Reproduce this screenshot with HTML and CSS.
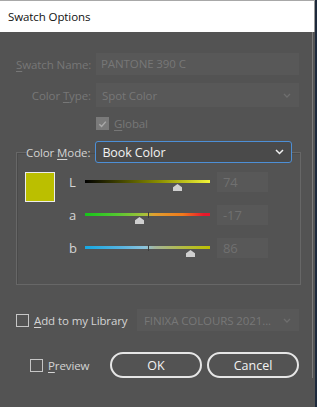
FILE: index.html
```html
<!DOCTYPE html>
<html lang="en">
<head>
    <meta charset="UTF-8">
    <title>Swatch Options</title>
    <link rel="stylesheet" href="styles.css">
</head>
<body>
    <div class="window">
        <div class="titlebar">Swatch Options</div>
        <div class="content">
            <div class="form-grid">
                <label class="field-label disabled"><u>S</u>watch Name:</label>
                <div class="text-input disabled">PANTONE 390 C</div>

                <label class="field-label disabled">Color <u>T</u>ype:</label>
                <div class="select disabled">
                    <span>Spot Color</span>
                    <svg class="chevron" width="8" height="5" viewBox="0 0 8 5"><path d="M1 1 L4 4 L7 1" fill="none" stroke="#6e6e6e" stroke-width="1.3"/></svg>
                </div>

                <span></span>
                <div class="check-row disabled">
                    <span class="checkbox checked">
                        <svg width="12" height="12" viewBox="0 0 12 12"><path d="M2.5 6.2 L5 8.6 L9.6 3.4" fill="none" stroke="#a9a9a9" stroke-width="1.6"/></svg>
                    </span>
                    <span><u>G</u>lobal</span>
                </div>
            </div>

            <fieldset class="group">
                <legend class="mode-row">
                    <label class="mode-label">Color <u>M</u>ode:</label>
                    <div class="select active">
                        <span>Book Color</span>
                        <svg class="chevron" width="9" height="6" viewBox="0 0 9 6"><path d="M1 1 L4.5 4.5 L8 1" fill="none" stroke="#f0f0f0" stroke-width="1.5"/></svg>
                    </div>
                </legend>
                <div class="color-area">
                    <div class="swatch"></div>
                    <div class="sliders">
                        <div class="slider-row">
                            <span class="channel">L</span>
                            <div class="track-wrap">
                                <div class="track track-l"></div>
                                <span class="thumb" style="left: 92px"></span>
                            </div>
                            <div class="value-box">74</div>
                        </div>
                        <div class="slider-row">
                            <span class="channel">a</span>
                            <div class="track-wrap">
                                <div class="track track-a"></div>
                                <span class="mid-mark"></span>
                                <span class="thumb" style="left: 54px"></span>
                            </div>
                            <div class="value-box">-17</div>
                        </div>
                        <div class="slider-row">
                            <span class="channel">b</span>
                            <div class="track-wrap">
                                <div class="track track-b"></div>
                                <span class="mid-mark"></span>
                                <span class="thumb" style="left: 105px"></span>
                            </div>
                            <div class="value-box">86</div>
                        </div>
                    </div>
                </div>
            </fieldset>

            <div class="library-row">
                <div class="check-row">
                    <span class="checkbox"></span>
                    <span><u>A</u>dd to my Library</span>
                </div>
                <div class="select disabled library-select">
                    <span>FINIXA COLOURS 2021...</span>
                    <svg class="chevron" width="8" height="5" viewBox="0 0 8 5"><path d="M1 1 L4 4 L7 1" fill="none" stroke="#6e6e6e" stroke-width="1.3"/></svg>
                </div>
            </div>

            <div class="footer-row">
                <div class="check-row preview">
                    <span class="checkbox"></span>
                    <span><u>P</u>review</span>
                </div>
                <div class="buttons">
                    <button class="btn">OK</button>
                    <button class="btn">Cancel</button>
                </div>
            </div>
        </div>
    </div>
</body>
</html>
```
FILE: styles.css
```css
body {
    margin: 0;
    background-color: #1d2a3c;
    font-family: "Open Sans", "Noto Sans", sans-serif;
    font-size: 11.5px;
    letter-spacing: -0.1px;
}
u {
    text-decoration-thickness: 1px;
    text-underline-offset: 2px;
}
.window {
    width: 315px;
    height: 407px;
    background-color: #535353;
    border-top: 1px solid #a8a8a8;
    box-sizing: border-box;
}
.titlebar {
    height: 31px;
    background-color: #ffffff;
    color: #111111;
    font-size: 11.5px;
    line-height: 31px;
    padding-left: 8px;
    border-right: 1px solid #9a9a9a;
}
.content {
    width: 313px;
    box-sizing: border-box;
    padding: 21px 13px 0 16px;
    border-right: 1px solid #7a7a7a;
}
.form-grid {
    display: grid;
    grid-template-columns: 75px 1fr;
    column-gap: 5px;
    row-gap: 8px;
    align-items: center;
}
.field-label {
    text-align: right;
    white-space: nowrap;
}
.disabled {
    color: #777777;
}
.text-input {
    height: 22px;
    line-height: 22px;
    background-color: #585858;
    padding-left: 5px;
}
.select {
    display: flex;
    align-items: center;
    justify-content: space-between;
    box-sizing: border-box;
}
.select.disabled {
    height: 24px;
    background-color: #585858;
    padding: 0 8px 0 6px;
}
.check-row {
    display: flex;
    align-items: center;
    gap: 5px;
    color: #d4d4d4;
    height: 16px;
}
.check-row.disabled {
    color: #777777;
}
.checkbox {
    width: 11px;
    height: 11px;
    border: 1px solid #c6c6c6;
    flex: none;
    display: flex;
}
.checkbox.checked {
    background-color: #7a7a7a;
    border-color: #7a7a7a;
}
.group {
    margin: 10px 0 0 0;
    padding: 9px 8px 26px 8px;
    border: 1px solid #676767;
    box-shadow: inset 1px 1px 0 #4a4a4a;
    width: 284px;
    box-sizing: border-box;
}
.mode-row {
    display: flex;
    align-items: center;
    gap: 5px;
    padding: 0;
    margin-left: 1px;
}
.mode-label {
    color: #d4d4d4;
    white-space: nowrap;
}
.select.active {
    width: 197px;
    height: 22px;
    border: 1px solid #4d8fd6;
    border-radius: 3px;
    background-color: #4a4a4a;
    color: #f2f2f2;
    font-size: 12.5px;
    padding: 0 7px 0 6px;
}
.color-area {
    display: flex;
    gap: 11px;
}
.swatch {
    width: 28px;
    height: 28px;
    background-color: #bbbf00;
    border: 1px solid #ececec;
    flex: none;
}
.sliders {
    display: flex;
    flex-direction: column;
    gap: 13px;
}
.slider-row {
    display: flex;
    align-items: center;
    height: 20px;
}
.channel {
    width: 19px;
    color: #d4d4d4;
    font-size: 13px;
    padding-left: 3px;
    box-sizing: border-box;
}
.track-wrap {
    position: relative;
    width: 125px;
    height: 20px;
    margin-right: 7px;
}
.track {
    position: absolute;
    left: 0;
    right: 0;
    top: 8px;
    height: 3px;
}
.track-l {
    background: linear-gradient(to right, #000000, #3a3c00 25%, #8c9000 60%, #f2f53a);
}
.track-a {
    background: linear-gradient(to right, #16c41a, #52c830 25%, #a8c03a 48%, #e0a030 55%, #f07a1c 78%, #e8182c 95%);
}
.track-b {
    background: linear-gradient(to right, #16a8e2, #5ab4e0 30%, #8cc4dc 48%, #a4b49a 56%, #b4bc3c 80%, #bcc000);
}
.mid-mark {
    position: absolute;
    left: 63px;
    top: 7px;
    width: 1px;
    height: 6px;
    background-color: #3c3c3c;
}
.thumb {
    position: absolute;
    top: 12px;
    width: 9px;
    height: 7px;
    margin-left: -4px;
    background-color: #cfcfcf;
    clip-path: polygon(50% 0, 100% 45%, 100% 100%, 0 100%, 0 45%);
}
.value-box {
    width: 51px;
    height: 20px;
    line-height: 20px;
    background-color: #585858;
    color: #707070;
    padding-left: 6px;
    box-sizing: border-box;
    font-size: 13px;
}
.library-row {
    display: flex;
    align-items: center;
    justify-content: space-between;
    margin-top: 24px;
}
.select.library-select {
    width: 162px;
    height: 22px;
    padding: 0 8px 0 7px;
}
.footer-row {
    display: flex;
    align-items: center;
    justify-content: space-between;
    margin-top: 21px;
}
.preview {
    margin-left: 14px;
}
.buttons {
    display: flex;
    gap: 5px;
}
.btn {
    width: 92px;
    height: 26px;
    border: 2px solid #e6e6e6;
    border-radius: 13px;
    background-color: transparent;
    color: #f2f2f2;
    font-family: "Open Sans", "Noto Sans", sans-serif;
    font-size: 12.5px;
    padding: 0;
}
```
